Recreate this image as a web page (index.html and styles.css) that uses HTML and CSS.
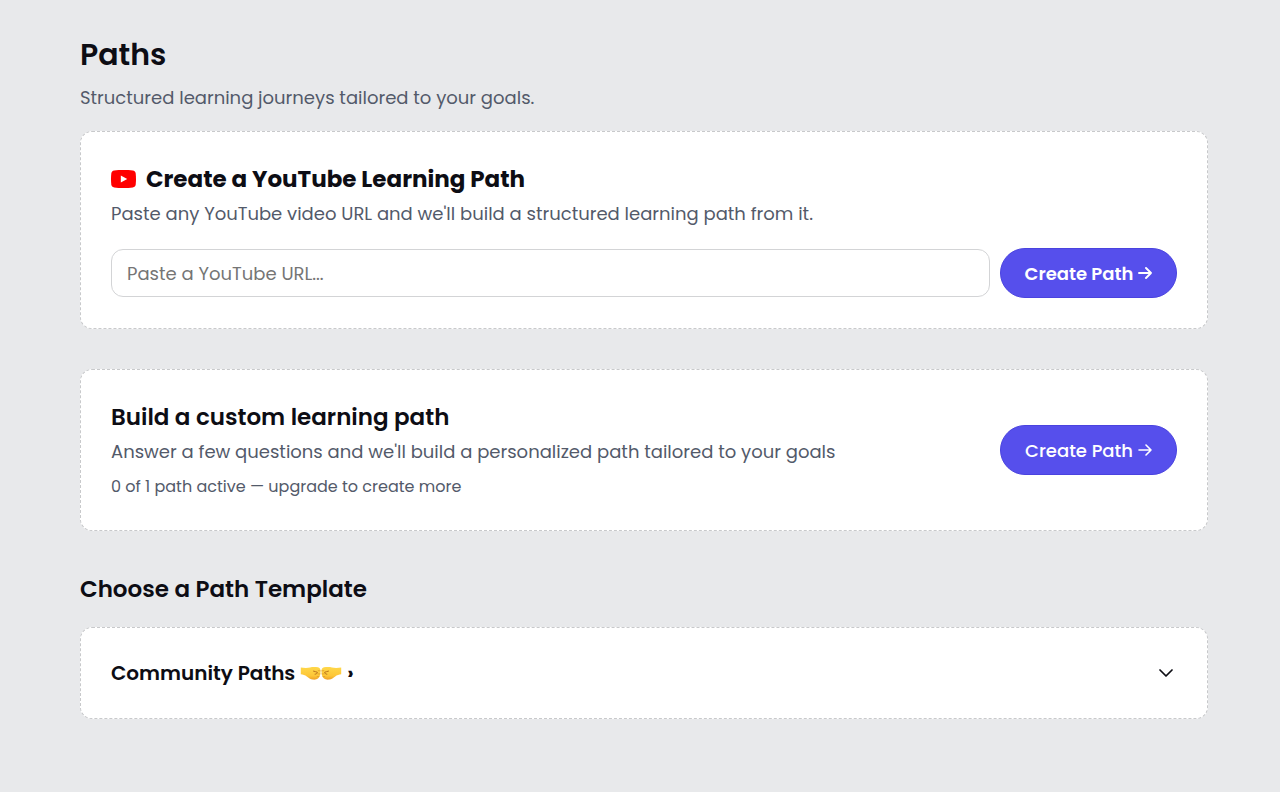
FILE: index.html
```html
<!DOCTYPE html>
<html lang="en">
<head>
    <meta charset="UTF-8">
    <meta name="viewport" content="width=device-width, initial-scale=1.0">
    <title>Paths</title>
    <link rel="stylesheet" href="styles.css">
</head>
<body>
    <main class="page">
        <h1 class="page-title">Paths</h1>
        <p class="page-subtitle">Structured learning journeys tailored to your goals.</p>

        <!-- YouTube path -->
        <section class="card">
            <h2 class="card-title youtube-title">
                <svg class="youtube-icon" viewBox="0 0 25 18" aria-hidden="true">
                    <path fill="#ff0000" d="M3.2.5C6 .1 9 0 12.500 0S19 .1 21.800.5C23.600.8 24.400 1.600 24.700 3.400c.4 3.700.4 7.500 0 11.200-.3 1.800-1.100 2.600-2.900 2.900C19 17.900 16 18 12.500 18S6 17.900 3.200 17.500C1.400 17.200.6 16.400.3 14.600c-.4-3.700-.4-7.500 0-11.200C.6 1.600 1.400.8 3.200.5z"/>
                    <path fill="#ffffff" d="M9.800 5.600v7L16.200 9.100z"/>
                </svg>
                Create a YouTube Learning Path
            </h2>
            <p class="card-text"><label for="youtube-url">Paste any YouTube video URL and we'll build a structured learning path from it.</label></p>
            <form class="url-form">
                <input class="url-input" id="youtube-url" type="url" placeholder="Paste a YouTube URL...">
                <button class="create-btn create-btn-strong" type="submit">
                    Create Path
                    <svg class="arrow-icon" viewBox="0 0 14 14" aria-hidden="true"><path d="M1 7h12M8 2l5 5-5 5"/></svg>
                </button>
            </form>
        </section>

        <!-- Custom path -->
        <section class="card custom-card">
            <div class="custom-info">
                <h2 class="card-title">Build a custom learning path</h2>
                <p class="card-text">Answer a few questions and we'll build a personalized path tailored to your goals</p>
                <p class="card-note">0 of 1 path active — upgrade to create more</p>
            </div>
            <button class="create-btn" type="button">
                Create Path
                <svg class="arrow-icon" viewBox="0 0 14 14" aria-hidden="true"><path d="M1 7h12M8 2l5 5-5 5"/></svg>
            </button>
        </section>

        <!-- Templates -->
        <h2 class="section-title">Choose a Path Template</h2>
        <section class="card">
            <button class="community-toggle" type="button" aria-expanded="false">
                <span class="community-name">
                    Community Paths
                    <svg class="fists-icon" viewBox="0 0 42 16" aria-hidden="true">
                        <defs>
                            <linearGradient id="skin" x1="0" y1="0" x2="0" y2="1">
                                <stop offset="0" stop-color="#ffd84a"/>
                                <stop offset=".7" stop-color="#fdc637"/>
                                <stop offset="1" stop-color="#ee9f26"/>
                            </linearGradient>
                            <g id="fist">
                                <path fill="url(#skin)" d="M.8 2.400C4 3 7.500 3.100 10 2.400c2.600-.7 5.500-.6 8-.1 1.700.4 2.500 1.700 2.500 3.700 0 3-.5 5.500-2 7-1.500 1.400-3.700 2-5.800 1.600-2.300-.4-4-1.700-5.900-3.200C5 10 3 9.500.8 9.200z"/>
                                <path fill="none" stroke="#b9721c" stroke-width="1" stroke-linecap="round" stroke-linejoin="round" d="M13.500 6.200c1.300.6 2.900.3 3.900 1.100-.2 1.200-1 1.800-2.300 1.900"/>
                                <path fill="none" stroke="#d88d20" stroke-width=".6" stroke-linecap="round" d="M18 8.900h2M17.200 11.600h1.800M18.200 5.700l2 .1"/>
                            </g>
                        </defs>
                        <use href="#fist"/>
                        <use href="#fist" transform="matrix(-1 0 0 1 42 0)"/>
                    </svg>
                    <span class="community-more">›</span>
                </span>
                <svg class="chevron-icon" viewBox="0 0 14 8" aria-hidden="true"><path d="M1 1l6 6 6-6"/></svg>
            </button>
        </section>
    </main>
</body>
</html>
```
FILE: styles.css
```css
* {
    box-sizing: border-box;
}

body {
    margin: 0;
    font-family: Poppins, Inter, sans-serif;
    background-color: #e8e9eb;
    color: #0d0d14;
}

h1, h2, p {
    margin: 0;
}

button, input {
    font-family: inherit;
}

.page {
    padding: 32px 72px 32px 80px;
}

.page-title {
    margin-bottom: 6px;
    font-size: 30px;
    line-height: 46px;
    font-weight: 600;
}

.page-subtitle {
    margin-bottom: 19px;
    font-size: 18px;
    line-height: 28px;
    color: #535a6a;
}

.card {
    padding: 30px;
    background-color: #ffffff;
    border: 1px dashed #c8c9cb;
    border-radius: 12px;
}

.card-title {
    margin-bottom: 4px;
    font-size: 23px;
    line-height: 34px;
    font-weight: 600;
}

.youtube-title {
    display: flex;
    align-items: center;
    gap: 10px;
    font-weight: 700;
}

.youtube-icon {
    width: 25px;
    height: 18px;
}

.card-text {
    font-size: 18px;
    line-height: 28px;
    color: #535a6a;
}

.card-note {
    margin-top: 8px;
    font-size: 16px;
    line-height: 26px;
    color: #535a6a;
}

.url-form {
    display: flex;
    align-items: center;
    gap: 10px;
    margin-top: 20px;
}

.url-input {
    flex: 1;
    min-width: 0;
    height: 48px;
    padding: 0 15px;
    font-size: 18px;
    color: #0d0d14;
    background-color: #ffffff;
    border: 1px solid #d3d4d6;
    border-radius: 12px;
}

.url-input::placeholder {
    color: #757575;
}

.create-btn {
    display: flex;
    align-items: center;
    justify-content: center;
    gap: 5px;
    flex-shrink: 0;
    width: 177px;
    height: 50px;
    padding: 0;
    font-size: 18px;
    font-weight: 500;
    color: #ffffff;
    background-color: #564fec;
    border: 1px solid #4a43df;
    border-radius: 25px;
    cursor: pointer;
}

.create-btn:hover {
    background-color: #4a43df;
}

.create-btn-strong {
    font-weight: 600;
}

.arrow-icon {
    width: 14px;
    height: 14px;
    fill: none;
    stroke: currentColor;
    stroke-width: 1.6;
    stroke-linecap: round;
    stroke-linejoin: round;
}

.create-btn-strong .arrow-icon {
    stroke-width: 1.9;
}

.custom-card {
    display: flex;
    align-items: center;
    justify-content: space-between;
    gap: 20px;
    margin-top: 40px;
}

.section-title {
    margin: 40px 0 20px;
    font-size: 23px;
    line-height: 36px;
    font-weight: 600;
}

.community-toggle {
    display: flex;
    align-items: center;
    justify-content: space-between;
    width: 100%;
    padding: 0 4px 0 0;
    font-size: 20px;
    line-height: 30px;
    font-weight: 600;
    color: inherit;
    background: none;
    border: none;
    cursor: pointer;
}

.community-name {
    display: flex;
    align-items: center;
    gap: 5px;
}

.community-more {
    font-size: 18px;
    font-weight: 800;
}

.fists-icon {
    width: 42px;
    height: 16px;
}

.chevron-icon {
    width: 14px;
    height: 8px;
    fill: none;
    stroke: currentColor;
    stroke-width: 1.7;
    stroke-linecap: round;
    stroke-linejoin: round;
}
```
